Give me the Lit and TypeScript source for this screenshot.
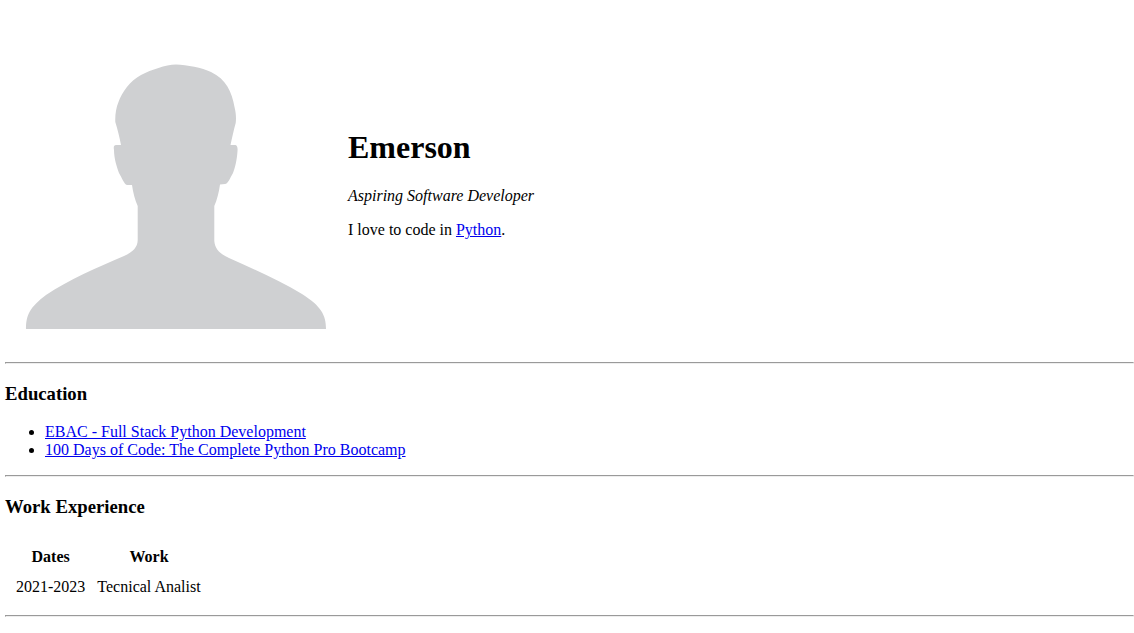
import { LitElement, html, css } from "lit";
import { customElement } from "lit/decorators.js";

@customElement("app-root")
class AppRoot extends LitElement {
  static styles = css`
    :host {
      display: block;
      height: 633px;
      overflow: hidden;
      box-sizing: border-box;
      padding-left: 5px;
      background: #fff;
      color: #000;
      font: 16px/18px "Liberation Serif", "Times New Roman", serif;
    }
    .intro {
      display: flex;
      align-items: center;
      gap: 12px;
      height: 354px;
      padding: 14px 0 0 11px;
      box-sizing: border-box;
    }
    .portrait { display: block; width: 320px; height: 320px; flex: none; }
    .about { padding-top: 16px; }
    h1 { font-size: 32px; line-height: 36px; margin: 0 0 22px; }
    h3 { font-size: 18.72px; line-height: 22px; margin: 19px 0 18px; }
    .work { margin-bottom: 19px; }
    p { margin: 0 0 16px; }
    ul { margin: 0 0 16px; padding-left: 40px; }
    a { color: #0000ee; text-decoration: underline; }
    hr {
      height: 2px;
      box-sizing: border-box;
      margin: 8px 0;
      border: 1px solid;
      border-color: #9a9a9a #eee #eee #9a9a9a;
    }
    table { border-spacing: 10px; border-collapse: separate; }
    th, td { padding: 1px; }
  `;

  render() {
    return html`
      <section class="intro">
        <svg class="portrait" viewBox="16 24 320 320" aria-hidden="true">
          <path fill="#cfd0d2" d="M176 64.5 C187 65 202 67.500 211 72 C226 79 232 92 234.500 107 C236 113 236.300 118 235.700 123 C233.500 131 232 138 230.500 145 L235.500 145 Q238 146 237.500 151 C237 160 235 168 233 173 C230 178 228 184 225 184 L220 184.500 C219 192 217 200 214.300 206 L214.300 241 C215 249 220 254 229 258 C253 269 279 280 302 294 C321 306 326 315 326 329 L26 329 C26 315 30 307 46 295 C68 280 98 267 124 256 C133 252 137.700 247 137.700 240 L137.700 206 C135 200 133 192 132 185 L127 185 C124 184 122 178 119 173 C117 167 114 159 114 150 Q113 145 116 145 L121 145 C119.500 137 117.500 129 115.300 122 C115 115 116 108 118.500 102 C122 92 130 81 141 75 C152 69.500 165 65 176 64.500 Z"/>
        </svg>
        <div class="about">
          <h1>Emerson</h1>
          <p><em>Aspiring Software Developer</em></p>
          <p>I love to code in <a href="#">Python</a>.</p>
        </div>
      </section>
      <hr />
      <h3>Education</h3>
      <ul>
        <li><a href="#">EBAC - Full Stack Python Development</a></li>
        <li><a href="#">100 Days of Code: The Complete Python Pro Bootcamp</a></li>
      </ul>
      <hr />
      <h3 class="work">Work Experience</h3>
      <table>
        <thead><tr><th>Dates</th><th>Work</th></tr></thead>
        <tbody><tr><td>2021-2023</td><td>Tecnical Analist</td></tr></tbody>
      </table>
      <hr />
    `;
  }
}
